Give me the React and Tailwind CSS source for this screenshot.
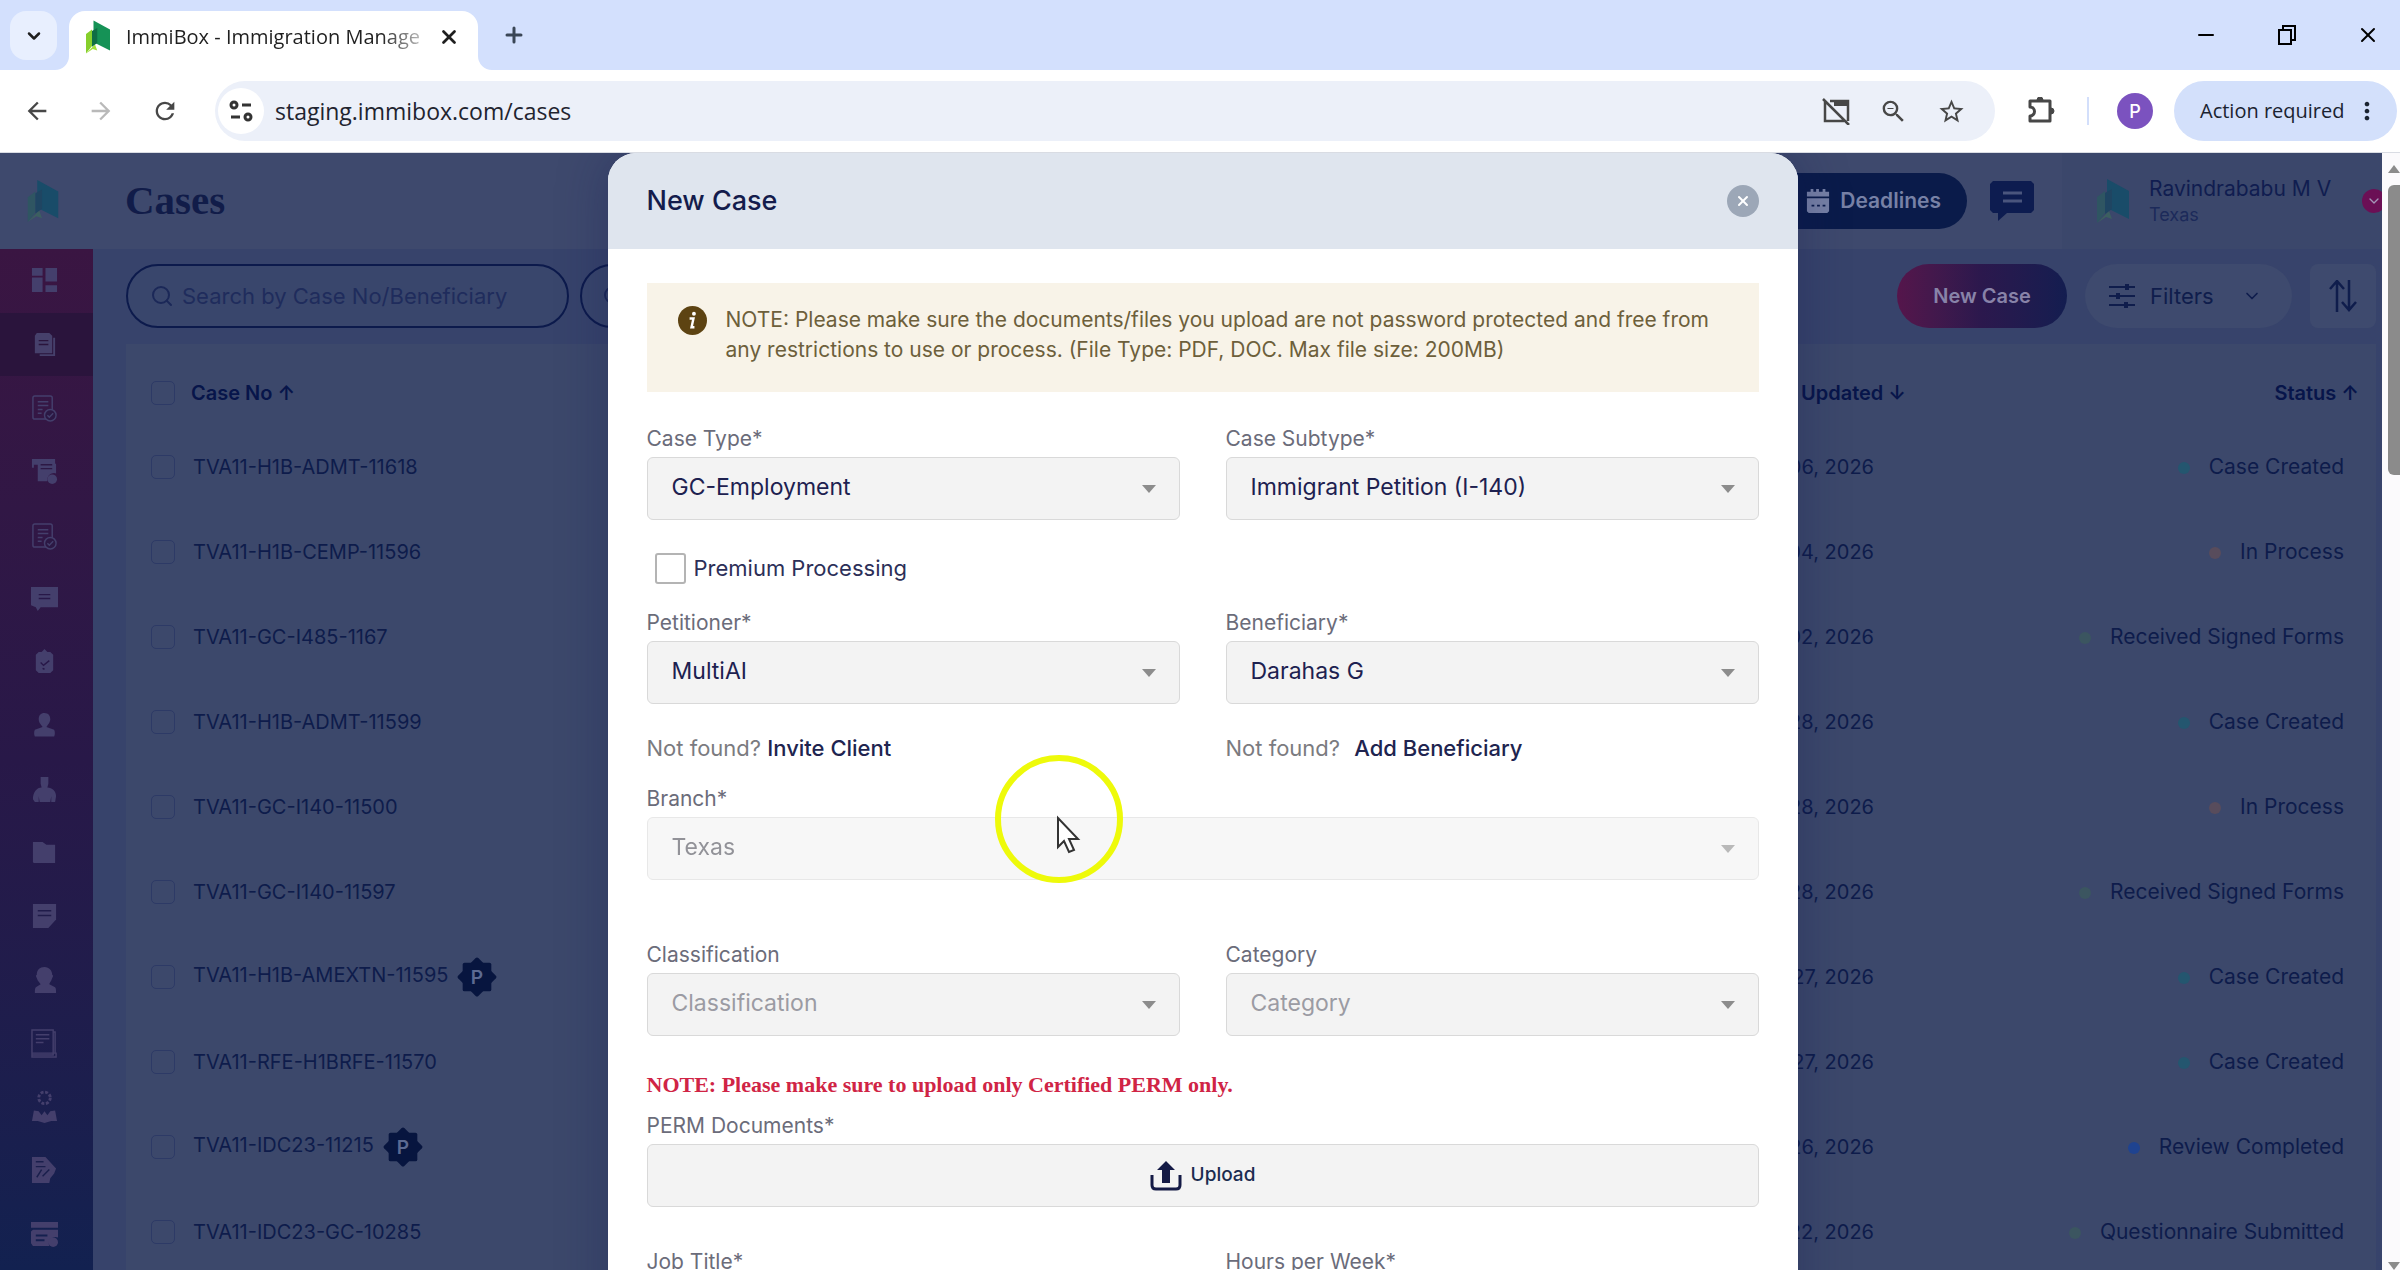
import { useState } from 'react'
import { MdArrowBack, MdArrowForward, MdMoreVert, MdRefresh, MdStarBorder, MdZoomOut } from 'react-icons/md'
import { ChevronDown, Minus, Plus, Search, X } from 'lucide-react'

const rows = [
  { no: 'TVA11-H1B-ADMT-11618', date: 'Feb 06, 2026', status: 'Case Created', dot: 'bg-[#24566f]' },
  { no: 'TVA11-H1B-CEMP-11596', date: 'Feb 04, 2026', status: 'In Process', dot: 'bg-[#584c5c]' },
  { no: 'TVA11-GC-I485-1167', date: 'Feb 02, 2026', status: 'Received Signed Forms', dot: 'bg-[#3b5560]' },
  { no: 'TVA11-H1B-ADMT-11599', date: 'Jan 28, 2026', status: 'Case Created', dot: 'bg-[#24566f]' },
  { no: 'TVA11-GC-I140-11500', date: 'Jan 28, 2026', status: 'In Process', dot: 'bg-[#584c5c]' },
  { no: 'TVA11-GC-I140-11597', date: 'Jan 28, 2026', status: 'Received Signed Forms', dot: 'bg-[#3b5560]' },
  { no: 'TVA11-H1B-AMEXTN-11595', date: 'Jan 27, 2026', status: 'Case Created', dot: 'bg-[#24566f]', premium: true },
  { no: 'TVA11-RFE-H1BRFE-11570', date: 'Jan 27, 2026', status: 'Case Created', dot: 'bg-[#24566f]' },
  { no: 'TVA11-IDC23-11215', date: 'Jan 26, 2026', status: 'Review Completed', dot: 'bg-[#1f4390]', premium: true },
  { no: 'TVA11-IDC23-GC-10285', date: 'Jan 22, 2026', status: 'Questionnaire Submitted', dot: 'bg-[#3b5560]' },
]

// Sidebar icons, all on a 28x28 grid
const docLines = (
  <>
    <rect x="2" y="2" width="20" height="24" rx="2" fill="none" stroke="currentColor" strokeWidth="1.5" />
    <path d="M7 8h11M7 12h11M7 16h5M7 20h4" fill="none" stroke="currentColor" strokeWidth="1.5" />
    <circle cx="20" cy="22" r="6" className="fill-[#2c1844]" stroke="currentColor" strokeWidth="1.5" />
    <path d="M17 22l2 2 4-4" fill="none" stroke="currentColor" strokeWidth="1.5" />
  </>
)

const sideItems = [
  { label: 'Dashboard', icon: <path d="M1 1h11v8H1zM1 11h11v15H1zM15 1h12v14H15zM15 19h12v7H15z" /> },
  {
    label: 'Cases',
    active: true,
    icon: (
      <>
        <path d="M6 2h13l3 3v18H4V5z" />
        <path d="M24 7v18H9" fill="none" stroke="currentColor" strokeWidth="2" />
        <path d="M8 10h10M8 14h10" className="stroke-[#2a143c]" strokeWidth="1.5" />
      </>
    ),
  },
  { label: 'Forms', icon: docLines },
  {
    label: 'Invoices',
    icon: (
      <>
        <path d="M1 1h24v5h1v10a7 7 0 0 0-9 8H7V7H3V10H1z" />
        <path d="M10 7h12M10 11h12" className="stroke-[#2c1844]" strokeWidth="1.5" />
        <circle cx="22" cy="22" r="5" />
      </>
    ),
  },
  { label: 'Approvals', icon: docLines },
  {
    label: 'Messages',
    icon: (
      <>
        <path d="M0 2h28v21H10l-3 4-2-4-5-2z" />
        <path d="M8 10h12M8 14h12" className="stroke-[#281848]" strokeWidth="1.5" />
      </>
    ),
  },
  {
    label: 'Tasks',
    icon: (
      <>
        <path d="M8 3h3l3-3 3 3h3l3 3v16l-3 3H8l-3-3V6z" />
        <path d="M10 14l3 3 6-5M12 20l2 1" className="stroke-[#281848]" fill="none" strokeWidth="1.5" />
      </>
    ),
  },
  { label: 'Petitioners', icon: <path d="M14 1c4 0 6 3 6 6.500s-3 6-4 8l8 3c1 2 1 5 0 7H4c-1-2-1-5 0-7l8-3c-1-2-4-4-4-8S10 1 14 1z" /> },
  { label: 'Beneficiaries', icon: <path d="M10 1h8v7l-1 4c5 0 9 4 9 9l-1 6h-4v-6l-1 6H9l-1-6v6H4l-2-3c0-7 4-12 9-12l-1-4z" /> },
  { label: 'Folders', icon: <path d="M2 3h10l4 3h9v19H3L2 24z" /> },
  {
    label: 'Notes',
    icon: (
      <>
        <path d="M2 1h24v16l-8 9H2z" />
        <path d="M7 8h14M7 13h14" className="stroke-[#201c4a]" strokeWidth="1.5" />
      </>
    ),
  },
  { label: 'Support', icon: <path d="M14 1c5 0 8 4 8 8l1 1-2 5c-1 2-2 3-2 4l6 3c1 1 1 4 1 6H4c0-3 0-5 1-6l5-3-3-4-2-5 1-1c0-5 3-8 8-8z" /> },
  {
    label: 'Templates',
    icon: (
      <g fill="none" stroke="currentColor" strokeWidth="1.500">
        <path d="M1 0h22v26H1zM1 24h25v4H1zM23 2h2v22" />
        <path d="M5 5h14M5 9h14M5 13h8" />
      </g>
    ),
  },
  {
    label: 'Teams',
    icon: (
      <>
        <circle cx="14" cy="4" r="6" fill="none" stroke="currentColor" strokeWidth="3" strokeDasharray="3 1.700" />
        <path d="M1 28l2-11 5 1 3 4 3-4 3 4 3-4 5-1 2 11h-6l-7 2-7-2z" />
      </>
    ),
  },
  {
    label: 'Reports',
    icon: (
      <>
        <path d="M1 0h14l11 12-2 5-4 5-1 5H1z" />
        <path d="M5 5h8M5 10h10M6 21l5-8M12 20l7-7" className="stroke-[#1a1f4c]" strokeWidth="1.500" />
      </>
    ),
  },
  {
    label: 'Billing',
    icon: (
      <>
        <path d="M0 1h28v6H0zM2 9h26v8a7 7 0 0 0-9 9H2l-2-3V11z" />
        <path d="M5 15h12M5 20h9" className="stroke-[#14204f]" strokeWidth="2" />
        <circle cx="23" cy="22" r="5" />
      </>
    ),
  },
]

function Logo({ className, dim }) {
  return (
    <svg viewBox="0 0 32 44" className={className}>
      <path d="M0 18l8-6v22L0 44z" fill={dim ? '#2f5562' : '#86cf2b'} />
      <path d="M0 44l12-12 3 8-6-2z" fill={dim ? '#3c5f60' : '#a3e03a'} />
      <path d="M10 0l22 12v28L10 29z" fill={dim ? '#194c69' : '#159256'} />
      <path d="M8 14l7-4v20l-7 5z" fill={dim ? '#1f4562' : '#0f6d45'} />
    </svg>
  )
}

function TabStrip() {
  return (
    <div className="flex h-[70px] items-start bg-[#d3e0fd] pt-[11px] pr-[20px] pl-[10px]">
      <button aria-label="Search tabs" className="flex h-[49px] w-[47px] items-center justify-center rounded-2xl bg-[#e8effe]">
        <ChevronDown className="size-5 text-[#1f1f1f]" strokeWidth={3} />
      </button>
      <div className="relative ml-[12px] flex h-[59px] w-[409px] items-center rounded-t-2xl bg-white pr-[18px] pb-2 pl-[17px]">
        <svg viewBox="0 0 14 14" className="absolute bottom-0 -left-[14px] size-[14px]"><path d="M14 0v14H0A14 14 0 0 0 14 0z" fill="#fff" /></svg>
        <svg viewBox="0 0 14 14" className="absolute -right-[14px] bottom-0 size-[14px]"><path d="M0 0v14h14A14 14 0 0 1 0 0z" fill="#fff" /></svg>
        <Logo className="h-[34px] w-6 shrink-0" />
        <span className="mr-3 ml-4 flex-1 overflow-hidden bg-gradient-to-r from-[#1f1f1f] from-85% to-[#1f1f1f]/20 bg-clip-text font-['Open_Sans'] text-[20px] whitespace-nowrap text-transparent">
          ImmiBox - Immigration Manage
        </span>
        <button aria-label="Close tab"><X className="size-[22px] text-[#1f1f1f]" strokeWidth={3} /></button>
      </div>
      <button aria-label="New tab" className="mt-3 ml-[24px]"><Plus className="size-6 text-[#3a4656]" strokeWidth={3} /></button>
      <div className="mt-3 ml-auto flex gap-[57px] text-black">
        <button aria-label="Minimize"><Minus className="size-6" strokeWidth={2} /></button>
        <button aria-label="Restore">
          <svg viewBox="0 0 24 24" className="size-6" fill="none" stroke="currentColor" strokeWidth="2"><path d="M4 7h12v14H4zM8 7V3h12v14h-4" /></svg>
        </button>
        <button aria-label="Close"><X className="size-6" strokeWidth={2} /></button>
      </div>
    </div>
  )
}

function AddressBar() {
  return (
    <div className="flex h-[83px] items-center border-b border-[#d9dce3] bg-white pr-[3px] pl-[23px]">
      <div className="flex gap-9 pr-9 text-[28px] text-[#474747]">
        <button aria-label="Back"><MdArrowBack /></button>
        <button aria-label="Forward" disabled className="text-[#b9b9b9]"><MdArrowForward /></button>
        <button aria-label="Reload"><MdRefresh /></button>
      </div>
      <div className="flex h-[60px] flex-1 items-center gap-[29px] rounded-full bg-[#ecf0f9] pr-[29px] pl-[3px] text-[#474747]">
        <div className="flex flex-1 items-center">
          <button aria-label="Site information" className="flex size-[46px] items-center justify-center rounded-full bg-white">
            <svg viewBox="0 0 24 24" className="size-6" fill="none" stroke="#333" strokeWidth="3"><circle cx="5" cy="6" r="3" /><path d="M13 6h9M2 18h9" /><circle cx="19" cy="18" r="3" /></svg>
          </button>
          <input aria-label="Address" defaultValue="staging.immibox.com/cases" className="ml-[11px] flex-1 bg-transparent font-['Open_Sans'] text-[23px] text-[#1f2430] outline-none" />
        </div>
        <button aria-label="Camera blocked">
          <svg viewBox="0 0 28 28" className="size-7" fill="none" stroke="currentColor" strokeWidth="2.500"><path d="M8 4h18v20M3 4v20h19M1 2l26 26" /><path d="M12 7h14" strokeWidth="4" /></svg>
        </button>
        <button aria-label="Zoom" className="text-[29px]"><MdZoomOut /></button>
        <button aria-label="Bookmark" className="text-[29px]"><MdStarBorder /></button>
      </div>
      <button aria-label="Extensions" className="mx-[32px]">
        <svg viewBox="0 0 28 28" className="size-7" fill="none" stroke="#474747" strokeWidth="3" strokeLinejoin="round"><path d="M3 4h20v20H3v-5a4 4 0 0 0 0-9z" /><path d="M10 3a3 3 0 0 1 6 0zM24 11a3 3 0 0 1 0 6z" fill="#474747" strokeWidth="1" /></svg>
      </button>
      <div className="h-7 w-[2px] bg-[#d3dffb]" />
      <button className="mr-[21px] ml-[28px] size-9 rounded-full bg-[#7b52bf] font-['Inter'] text-[18px] font-medium text-white">P</button>
      <button className="flex h-[60px] w-[223px] items-center justify-between rounded-full bg-[#d3e0fb] pr-[16px] pl-[26px] font-['Open_Sans'] text-[20px] text-[#1a2330]">
        Action required
        <MdMoreVert className="text-[28px] text-[#1a2330]" />
      </button>
    </div>
  )
}

function PageHeader() {
  return (
    <header className="flex h-[96px] shrink-0 items-center bg-[#3e496d]">
      <Logo dim className="ml-[27px] h-[42px] w-[32px]" />
      <h1 className="ml-[66px] font-['Liberation_Serif'] text-[41px] font-bold text-[#111c49]">Cases</h1>
      <div className="ml-auto flex h-full items-center">
        <button className="flex h-[56px] w-[208px] items-center justify-end gap-[10px] rounded-full bg-[#0a1b4a] pr-[26px] text-[21px] font-semibold text-[#7781a6]">
          <svg viewBox="0 0 26 28" className="h-7 w-6" fill="currentColor"><path d="M1 4h24v5H1zM5 1h3v4H5zM11 1h3v4h-3zM18 1h3v4h-3zM1 11h24v14l-2 2H3l-2-2z" /><path d="M6 19h3M12 19h3M18 19h3" stroke="#0a1b4a" strokeWidth="2" /></svg>
          Deadlines
        </button>
        <button aria-label="Chat" className="ml-[23px]">
          <svg viewBox="0 0 44 40" className="h-10 w-11"><path d="M3 0h38l3 3v26l-3 3H17l-9 8v-8H3l-3-3V3z" fill="#0d1c50" /><path d="M13 12h19M13 20h19" stroke="#4a557d" strokeWidth="3" /></svg>
        </button>
        <div className="ml-[28px] flex h-full w-[320px] items-center bg-[#3b476b] pl-[33px]">
          <Logo dim className="h-[44px] w-[36px]" />
          <div className="ml-[18px] text-[#101d50]">
            <p className="text-[21px] leading-7 whitespace-nowrap">Ravindrababu M V</p>
            <p className="text-[18px] leading-6 text-[#1c2a5a]">Texas</p>
          </div>
          <button aria-label="Account menu" className="ml-auto -mr-1 flex size-6 shrink-0 items-center justify-center rounded-full bg-[#6b0f55]">
            <ChevronDown className="size-4 text-[#a596b8]" />
          </button>
        </div>
      </div>
    </header>
  )
}

function Sidebar() {
  return (
    <nav className="flex w-[93px] shrink-0 flex-col bg-gradient-to-b from-[#3a1542] via-[#281848] to-[#122150] pb-1">
      {sideItems.map((item) => (
        <a key={item.label} href="#" aria-label={item.label} className={item.active ? 'flex flex-1 items-center justify-center bg-[#2a143c] pr-1 text-[#46406b]' : 'flex flex-1 items-center justify-center pr-1 text-[#443f6c]'}>
          <svg viewBox="0 0 28 28" className="size-[27px] overflow-visible" fill="currentColor">{item.icon}</svg>
        </a>
      ))}
    </nav>
  )
}

function PremiumBadge() {
  return (
    <svg viewBox="-22 -22 44 44" className="ml-2 inline size-[42px]">
      <g fill="#07153f">
        <rect x="-15" y="-15" width="30" height="30" rx="2" />
        <rect x="-15" y="-15" width="30" height="30" rx="2" transform="rotate(45)" />
      </g>
      <text y="7" textAnchor="middle" fontSize="20" fontWeight="600" fill="#5c6a92">P</text>
    </svg>
  )
}

function CasesList() {
  const box = 'block size-[24px] appearance-none rounded-[5px] border border-[#2d3a66]'
  return (
    <main className="min-w-0 flex-1 bg-[#37436b] pt-[15px] pr-[6px] pl-[33px]">
      <div className="flex h-16 items-center gap-[11px]">
        <label className="flex h-full w-[443px] items-center gap-[8px] rounded-full border-2 border-[#0c1a4c] bg-[#39466c] pl-[22px]">
          <Search className="size-6 text-[#1b2858]" strokeWidth={2} />
          <input aria-label="Search by case number" placeholder="Search by Case No/Beneficiary" className="min-w-0 flex-1 bg-transparent text-[22px] outline-none placeholder:text-[#1f2c5c]" />
        </label>
        <button aria-label="Filter by case type" className="h-full w-[300px] rounded-full border-2 border-[#0c1a4c] bg-[#39466c] pl-[20px]">
          <Search className="size-6 text-[#1b2858]" />
        </button>
        <div className="ml-auto flex h-full gap-[18px]">
          <button className="w-[170px] rounded-full bg-gradient-to-r from-[#55154b] via-[#2b184d] to-[#131d50] text-[20px] font-semibold text-[#8883a8]">New Case</button>
          <button className="flex w-[207px] items-center rounded-full bg-[#3e4a6e] pl-[24px] text-[22px] text-[#0f1d4c]">
            <svg viewBox="0 0 26 28" className="h-7 w-[26px]" fill="none" stroke="currentColor" strokeWidth="2"><path d="M0 5h26M0 14h26M0 23h26" /><path d="M18 2v6M9 11v6M17 20v6" strokeWidth="4" /></svg>
            <span className="ml-[15px]">Filters</span>
            <ChevronDown className="ml-[28px] size-5" />
          </button>
          <button aria-label="Sort" className="flex w-[66px] items-center justify-center rounded-lg bg-[#3e4a6e] text-[#0f1d4c]">
            <svg viewBox="0 0 30 32" className="h-8 w-[30px]" fill="none" stroke="currentColor" strokeWidth="2.500"><path d="M9 32V2M2 9l7-8 7 8M21 0v29M14 22l7 8 7-8" /></svg>
          </button>
        </div>
      </div>
      <div className="mt-4 bg-[#3c486b] pt-[18px] text-[#0e1c4b]">
        <table className="w-full table-fixed">
          <thead className="text-[20px] text-[#07154a]">
            <tr className="h-[62px]">
              <th className="w-[65px] pl-[25px]"><input type="checkbox" aria-label="Select all cases" className={box} /></th>
              <th className="text-left font-semibold">Case No ↑</th>
              <th className="w-[180px] text-right font-semibold whitespace-nowrap">Last Updated ↓</th>
              <th className="w-[470px] pr-[17px] text-right font-semibold">Status ↑</th>
            </tr>
          </thead>
          <tbody>
            {rows.map((row) => (
              <tr key={row.no} className="h-[85px]">
                <td className="pl-[25px]"><input type="checkbox" aria-label={row.no} className={box} /></td>
                <td className="pl-[2px] text-[20px] whitespace-nowrap">{row.no}{row.premium && <PremiumBadge />}</td>
                <td className="pr-[32px] text-right text-[20px] whitespace-nowrap">{row.date}</td>
                <td className="pr-[32px] text-right text-[21px] whitespace-nowrap">
                  <span className={`${row.dot} mr-[19px] inline-block size-3 rounded-full align-middle`} />{row.status}
                </td>
              </tr>
            ))}
          </tbody>
        </table>
      </div>
    </main>
  )
}

const field = 'h-[63px] w-full rounded-[6px] border border-[#d9d9d9] bg-[#f3f3f3]'

function SelectField({ id, label, value, placeholder, disabled }) {
  return (
    <div>
      <FieldLabel id={id} label={label} />
      <div className={disabled ? 'relative opacity-60' : 'relative'}>
        <select id={id} disabled={disabled} className={`${field} appearance-none px-[24px] pb-[2px] text-[23px] ${placeholder ? 'text-[#9b9ba3]' : disabled ? 'text-[#4a4b55]' : 'text-[#1d2150]'}`}>
          <option>{value || placeholder}</option>
        </select>
        <svg viewBox="0 0 14 8" className="pointer-events-none absolute top-[28px] right-[24px] h-2 w-[14px]"><path d="M0 0h14L7 8z" fill="#8c8c8c" /></svg>
      </div>
    </div>
  )
}

function FieldLabel({ id, label }) {
  return <label htmlFor={id} className="block h-9 text-[21px] leading-9 text-[#6b6c7a]">{label}</label>
}

function NewCaseModal() {
  const [premium, setPremium] = useState(false)
  return (
    <div className="absolute inset-0 flex items-start justify-center overflow-hidden pl-[5px]">
      <section role="dialog" aria-labelledby="modal-title" className="w-[1190px] rounded-t-[28px] bg-white shadow-[0_0_50px_rgba(20,25,80,0.35)]">
        <header className="flex h-[96px] items-center justify-between rounded-t-[28px] bg-[#dfe5ee] px-[39px]">
          <h2 id="modal-title" className="text-[27px] font-medium text-[#141c4c]">New Case</h2>
          <button aria-label="Close dialog" className="flex size-8 items-center justify-center rounded-full bg-[#9ca7b7]">
            <X className="size-4 text-white" strokeWidth={3} />
          </button>
        </header>
        <form className="px-[39px] pt-[34px]">
          <div className="flex h-[109px] gap-[19px] bg-[#f8f3e8] pt-[22px] pl-[31px] text-[21px] leading-[30px] text-[#6d5f3b]">
            <svg viewBox="0 0 30 30" className="mt-[1px] size-[29px] shrink-0"><circle cx="15" cy="15" r="15" fill="#5d4312" /><circle cx="16.500" cy="8" r="2" fill="#fff" /><path d="M12 13h4l-2 9h3" fill="none" stroke="#fff" strokeWidth="2.500" /></svg>
            <p>
              NOTE: Please make sure the documents/files you upload are not password protected and free from
              <br />
              any restrictions to use or process. (File Type: PDF, DOC. Max file size: 200MB)
            </p>
          </div>

          <div className="mt-[29px] grid grid-cols-2 gap-x-[46px]">
            <SelectField id="caseType" label="Case Type*" value="GC-Employment" />
            <SelectField id="caseSubtype" label="Case Subtype*" value="Immigrant Petition (I-140)" />
          </div>

          <label className="flex h-[85px] items-center gap-2 pt-3 pl-[8px] text-[22px] text-[#2c2f58]">
            <input type="checkbox" checked={premium} onChange={(e) => setPremium(e.target.checked)} className="size-[31px] appearance-none rounded-[3px] border-2 border-[#b4b4b4] checked:bg-[#1d2150]" />
            Premium Processing
          </label>

          <div className="grid grid-cols-2 gap-x-[46px]">
            <SelectField id="petitioner" label="Petitioner*" value="MultiAI" />
            <SelectField id="beneficiary" label="Beneficiary*" value="Darahas G" />
            <p className="h-[77px] pt-[28px] text-[22px] leading-8 text-[#7b7b7f]">Not found? <a href="#" className="font-medium text-[#20244f]">Invite Client</a></p>
            <p className="h-[77px] pt-[28px] text-[22px] leading-8 text-[#7b7b7f]">Not found? <a href="#" className="ml-2 font-medium text-[#20244f]">Add Beneficiary</a></p>
          </div>

          <SelectField id="branch" label="Branch*" value="Texas" disabled />

          <div className="mt-[57px] grid grid-cols-2 gap-x-[46px]">
            <SelectField id="classification" label="Classification" placeholder="Classification" />
            <SelectField id="category" label="Category" placeholder="Category" />
          </div>

          <p className="h-[72px] pt-[33px] font-['Liberation_Serif'] text-[22px] leading-8 font-bold text-[#d02445]">
            NOTE: Please make sure to upload only Certified PERM only.
          </p>
          <FieldLabel id="perm" label="PERM Documents*" />
          <button id="perm" type="button" className={`${field} flex items-center justify-center gap-[9px] text-[19px] font-medium text-[#1b2c50]`}>
            <svg viewBox="0 0 32 30" className="h-[30px] w-8"><path d="M2 14v10q0 4 4 4h20q4 0 4-4V14" fill="none" stroke="#141a45" strokeWidth="3" /><path d="M16 0l9 9h-5v13h-8V9H7z" fill="#141a45" /></svg>
            Upload
          </button>

          <div className="mt-[37px] grid grid-cols-2 gap-x-[46px]">
            <div><FieldLabel id="jobTitle" label="Job Title*" /><input id="jobTitle" className={field} /></div>
            <div><FieldLabel id="hours" label="Hours per Week*" /><input id="hours" className={field} /></div>
          </div>
        </form>
      </section>
    </div>
  )
}

function PointerHighlight() {
  return (
    <svg viewBox="0 0 128 128" className="pointer-events-none absolute top-[602px] left-[995px] size-[128px]">
      <circle cx="64" cy="64" r="61" fill="none" stroke="#eefa0a" strokeWidth="6" />
      <path d="M63 63v29l6-6 5 11 5-2-5-11h9z" fill="#fff" stroke="#333" strokeWidth="2" />
    </svg>
  )
}

export default function App() {
  return (
    <div className="flex h-screen flex-col overflow-hidden font-['Inter',sans-serif]">
      <TabStrip />
      <AddressBar />
      <div className="relative flex min-h-0 flex-1">
        <div className="flex min-w-0 flex-1 flex-col overflow-hidden">
          <PageHeader />
          <div className="flex min-h-0 flex-1">
            <Sidebar />
            <CasesList />
          </div>
        </div>
        <div className="flex w-[18px] shrink-0 flex-col items-end bg-[#fbfafc] pt-[12px]">
          <svg viewBox="0 0 12 8" className="h-2 w-3"><path d="M6 0l6 8H0z" fill="#8b8b8b" /></svg>
          <div className="mt-[12px] h-[290px] w-3 rounded-l-md bg-[#8b8b8b]" />
          <svg viewBox="0 0 12 8" className="mt-auto h-2 w-3"><path d="M0 0h12L6 8z" fill="#8b8b8b" /></svg>
        </div>
        <NewCaseModal />
        <PointerHighlight />
      </div>
    </div>
  )
}
